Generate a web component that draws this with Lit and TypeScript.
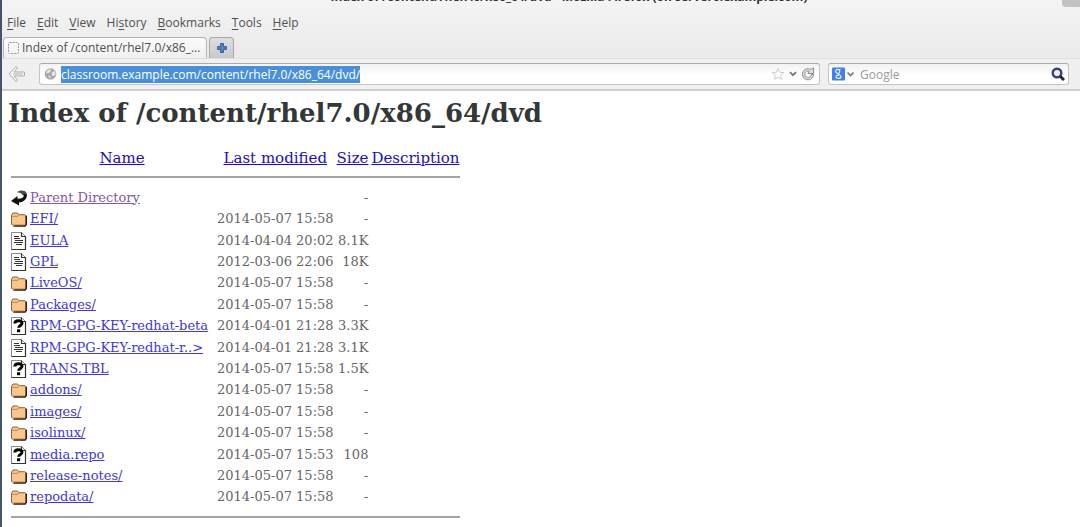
import { LitElement, html, css, svg } from "lit";
import { customElement, query } from "lit/decorators.js";

type Kind = "back" | "folder" | "text" | "unknown";
interface Entry {
  kind: Kind;
  name: string;
  date: string;
  size: string;
}

const TITLE = "Index of /content/rhel7.0/x86_64/dvd";

const ENTRIES: Entry[] = [
  { kind: "back", name: "Parent Directory", date: "", size: "-" },
  { kind: "folder", name: "EFI/", date: "2014-05-07 15:58", size: "-" },
  { kind: "text", name: "EULA", date: "2014-04-04 20:02", size: "8.1K" },
  { kind: "text", name: "GPL", date: "2012-03-06 22:06", size: "18K" },
  { kind: "folder", name: "LiveOS/", date: "2014-05-07 15:58", size: "-" },
  { kind: "folder", name: "Packages/", date: "2014-05-07 15:58", size: "-" },
  { kind: "unknown", name: "RPM-GPG-KEY-redhat-beta", date: "2014-04-01 21:28", size: "3.3K" },
  { kind: "text", name: "RPM-GPG-KEY-redhat-r..>", date: "2014-04-01 21:28", size: "3.1K" },
  { kind: "unknown", name: "TRANS.TBL", date: "2014-05-07 15:58", size: "1.5K" },
  { kind: "folder", name: "addons/", date: "2014-05-07 15:58", size: "-" },
  { kind: "folder", name: "images/", date: "2014-05-07 15:58", size: "-" },
  { kind: "folder", name: "isolinux/", date: "2014-05-07 15:58", size: "-" },
  { kind: "unknown", name: "media.repo", date: "2014-05-07 15:53", size: "108" },
  { kind: "folder", name: "release-notes/", date: "2014-05-07 15:58", size: "-" },
  { kind: "folder", name: "repodata/", date: "2014-05-07 15:58", size: "-" },
];

const page = svg`
  <path d="M.5.5h10l4 4v13H.5z" fill="#fff" stroke="#888"/>
  <path d="M10.500.500v4h4v13H.500" fill="none" stroke="#333" stroke-width="1.200"/>`;

const ICONS = {
  back: svg`
    <path d="M9.500 9.500C13 9 13.500 6.500 11.500 5.500l4-1.500c1.500 4.500-1.500 9-7.500 9.500v3L0 12l6.500-5v2.800z" fill="#111"/>
    <path d="M6 3.500C8.500.8 14 1 15.500 4l-4 2C10.500 4 8.500 3.500 6 3.500z" fill="#4a4a4a"/>`,
  folder: svg`
    <path d="M2 16.800h12.500l1.500-2V6l-1.500-1z" fill="#2b1a0c"/>
    <path d="M.5 5.200 2 3h4.600l1.600 1.700h5.700l.7.800v8.800l-.8.900H1.400l-.9-.9z" fill="#fbc68d" stroke="#7a5433" stroke-width=".9"/>
    <path d="M1 6.300h5.600l1.500-1.400" fill="none" stroke="#a87848" stroke-width=".8"/>`,
  text: svg`${page}
    <path d="M3 4.500h5M3 6.500h6M4 8.500h8M3 10.500h9M5 12.500h6" stroke="#333" stroke-width="1.200"/>`,
  unknown: svg`${page}
    <path d="M3.800 6.500C4 2.800 11 2.800 11 6.300c0 2.300-3.300 2.200-3.300 4.500" fill="none" stroke="#000" stroke-width="3"/>
    <path d="M6 12.300h3.200v2.900H6z" fill="#000"/>`,
};

@customElement("browser-chrome")
class BrowserChrome extends LitElement {
  @query(".url") url!: HTMLInputElement;

  static styles = css`
    :host {
      display: block;
      font: 12px/16px "Open Sans", "Noto Sans", sans-serif;
      color: #505050;
      background: linear-gradient(#f4f4f4, #ebebeb 50px);
    }
    button {
      font: inherit;
      color: inherit;
      border: 0;
      padding: 0;
      background: none;
    }
    svg { display: block; flex: none; }
    .title {
      display: flex;
      justify-content: center;
      align-items: flex-end;
      height: 8px;
      margin-left: 56px;
      overflow: hidden;
      position: relative;
    }
    .title span {
      font-weight: 700;
      color: #333;
      white-space: nowrap;
      padding-bottom: 3px;
    }
    .corner {
      position: absolute;
      right: 0;
      top: 0;
      width: 18px;
      height: 7px;
      background: #c2c2c2;
      border-bottom-left-radius: 4px;
    }
    .menu {
      display: flex;
      gap: 11px;
      padding: 7px 5px 6px;
    }
    .menu u { text-underline-offset: 2px; }
    .tabs {
      display: flex;
      gap: 2px;
      padding-left: 1px;
      height: 21px;
    }
    .tab {
      display: flex;
      align-items: center;
      gap: 2px;
      width: 204px;
      box-sizing: border-box;
      padding: 0 3px;
      border: 1px solid #b4b4b4;
      border-bottom: 0;
      border-radius: 4px 4px 0 0;
      background: linear-gradient(#fbfbfb, #f0f0f0);
      white-space: nowrap;
    }
    .add {
      display: flex;
      align-items: center;
      justify-content: center;
      width: 25px;
      border: 1px solid #a8a8a8;
      border-bottom: 0;
      border-radius: 3px 4px 0 0;
      background: linear-gradient(#dedede, #c9c9c9);
    }
    .bar {
      display: flex;
      align-items: center;
      padding: 4px 11px 4px 5px;
      border-top: 1px solid #e0e0e0;
      border-bottom: 2px solid #d0d0d0;
      background: #f0f0f0;
    }
    .field {
      display: flex;
      align-items: center;
      height: 22px;
      box-sizing: border-box;
      border: 1px solid #c4c4c4;
      border-top-color: #aaa;
      border-radius: 3px;
      background: linear-gradient(#f3f3f3, #fff 12px);
    }
    .location { flex: 1; margin: 0 8px 0 12px; padding: 0 4px; gap: 4px; }
    .search { width: 241px; padding: 0 3px; gap: 2px; }
    input {
      flex: 1;
      min-width: 0;
      height: 18px;
      border: 0;
      padding: 0;
      outline: 0;
      background: none;
      font: inherit;
      color: #444;
    }
    input::placeholder { color: #9a9a9a; opacity: 1; }
    input::selection { background: #4a90d9; color: #fff; }
    .query { padding-left: 4px; }
  `;

  firstUpdated() {
    this.url.focus();
    this.url.select();
  }

  render() {
    const menu = ["File", "Edit", "View", "History", "Bookmarks", "Tools", "Help"];
    return html`
      <div class="title">
        <span>${TITLE} - Mozilla Firefox (on server0.example.com)</span>
        <div class="corner"></div>
      </div>
      <nav class="menu">
        ${menu.map((m) => {
          const k = m === "History" ? 2 : 0;
          return html`<button>${m.slice(0, k)}<u>${m[k]}</u>${m.slice(k + 1)}</button>`;
        })}
      </nav>
      <div class="tabs">
        <button class="tab">
          <svg width="13" height="14" viewBox="0 0 13 14"><rect x="1.500" y="1.500" width="10" height="11" rx="1" fill="none" stroke="#999" stroke-dasharray="2 1"/></svg>
          Index of /content/rhel7.0/x86_...
        </button>
        <button class="add" aria-label="New tab">
          <svg width="12" height="12" viewBox="0 0 12 12"><path d="M4.500 1.500h3v3h3v3h-3v3h-3v-3h-3v-3h3z" fill="#5580bd" stroke="#3a629d"/></svg>
        </button>
      </div>
      <div class="bar">
        <button aria-label="Back">
          <svg width="20" height="18" viewBox="0 0 20 18"><path d="M9 1.500 2 9l7 7.500 1.500-1.500-3.500-4h10.500V7H7l3.500-4zM6 9h10" fill="#f4f4f4" stroke="#b0b0b0" stroke-linejoin="round"/></svg>
        </button>
        <div class="field location">
          <svg width="13" height="14" viewBox="0 0 13 14"><circle cx="6.500" cy="7" r="5.800" fill="#a6a6a6"/><path d="M3 3.500 6 2l1 2-2 2-3 .5zM8 5l3-1 .8 3.500L9 9.500 7.500 7.500zM4 8l3 1.500-1 2.500z" fill="#e6e6e6"/></svg>
          <input class="url" aria-label="Location" .value=${"classroom.example.com/content/rhel7.0/x86_64/dvd/"} />
          <button aria-label="Bookmark this page">
            <svg width="14" height="14" viewBox="0 0 14 14"><path d="m7 1.500 1.600 3.700 4 .4-3 2.700.9 4L7 10.200l-3.500 2.100.9-4-3-2.700 4-.4z" fill="#fff" stroke="#ccc"/></svg>
          </button>
          <button aria-label="Show history">
            <svg width="8" height="6" viewBox="0 0 8 6"><path d="m1 1.200 3 3 3-3" fill="none" stroke="#777" stroke-width="1.700"/></svg>
          </button>
          <button aria-label="Reload">
            <svg width="14" height="14" viewBox="0 0 14 14"><path d="M9.800 2.400A5.600 5.600 0 1 0 12.600 7.500H10.200a3.200 3.200 0 1 1-2-3.200L6.800 6.500h5.700V.900z" fill="#ddd" stroke="#909090"/></svg>
          </button>
        </div>
        <div class="field search">
          <button aria-label="Search engine">
            <svg width="22" height="14" viewBox="0 0 22 14"><rect width="13" height="13" y=".5" rx="1" fill="#4080ea"/><path d="M8.500 2.500H6a2 2 0 1 0 1.200 3.300C8 5 7.500 3.500 6.800 2.700M6 6.500c0 1.300 3 1.200 3 3.200 0 2.300-5 2.300-5 .2 0-1.300 1.500-1.800 3-1.700" fill="none" stroke="#e6efff" stroke-width="1.200"/><path d="m15.500 5.500 3 3 3-3" fill="none" stroke="#777" stroke-width="1.700"/></svg>
          </button>
          <input class="query" aria-label="Search" placeholder="Google" />
          <button aria-label="Search">
            <svg width="14" height="14" viewBox="0 0 14 14"><circle cx="6" cy="6" r="4.300" fill="#eef" stroke="#3b4178" stroke-width="2.400"/><path d="m9 9 4 4" stroke="#22264c" stroke-width="3"/></svg>
          </button>
        </div>
      </div>
    `;
  }
}

@customElement("directory-index")
class DirectoryIndex extends LitElement {
  static styles = css`
    :host {
      display: block;
      padding: 4px 6px;
      font: 13px/20px "DejaVu Serif", serif;
      color: #666;
    }
    h1 {
      margin: 0 0 17px;
      font-size: 26px;
      line-height: 36px;
      color: #333737;
    }
    table { border-collapse: collapse; margin-left: 3px; }
    th, td {
      padding: 0 3px 0 0;
      text-align: left;
      font-weight: 400;
      white-space: nowrap;
    }
    th { text-align: center; height: 20px; font-size: 15px; }
    th.name { min-width: 184px; }
    th.size { text-align: right; }
    th:last-child { padding: 0; }
    .row { height: 21px; }
    .row:nth-child(5n), .row:nth-child(5n + 2) { height: 22px; }
    .num { text-align: right; }
    a { color: #4038d8; }
    th a { color: #1a0dbf; }
    .visited { color: #8558a8; }
    hr {
      margin: 8px 0;
      border: 0;
      height: 2px;
      background: #a3a3a3;
    }
    thead hr { margin-bottom: 9px; }
    .rule { padding: 0; }
    svg { display: block; }
  `;

  render() {
    const rule = html`<tr><td class="rule" colspan="5"><hr /></td></tr>`;
    return html`
      <h1>${TITLE}</h1>
      <table>
        <thead>
          <tr>
            <th></th>
            <th class="name"><a href="#name">Name</a></th>
            <th><a href="#modified">Last modified</a></th>
            <th class="size"><a href="#size">Size</a></th>
            <th><a href="#description">Description</a></th>
          </tr>
          ${rule}
        </thead>
        <tbody>
          ${ENTRIES.map(
            (e) => html`<tr class="row">
              <td><svg width="16" height="18" viewBox="0 0 16 18">${ICONS[e.kind]}</svg></td>
              <td><a class=${e.kind === "back" ? "visited" : ""} href="#${e.name}">${e.name}</a></td>
              <td class="num">${e.date}</td>
              <td class="num">${e.size}</td>
              <td></td>
            </tr>`
          )}
        </tbody>
        <tfoot>${rule}</tfoot>
      </table>
    `;
  }
}

@customElement("app-root")
class AppRoot extends LitElement {
  static styles = css`
    :host {
      display: block;
      box-sizing: border-box;
      min-height: 100vh;
      border-left: 2px solid #41566c;
      background: #fff;
    }
  `;

  render() {
    return html`<browser-chrome></browser-chrome><directory-index></directory-index>`;
  }
}
